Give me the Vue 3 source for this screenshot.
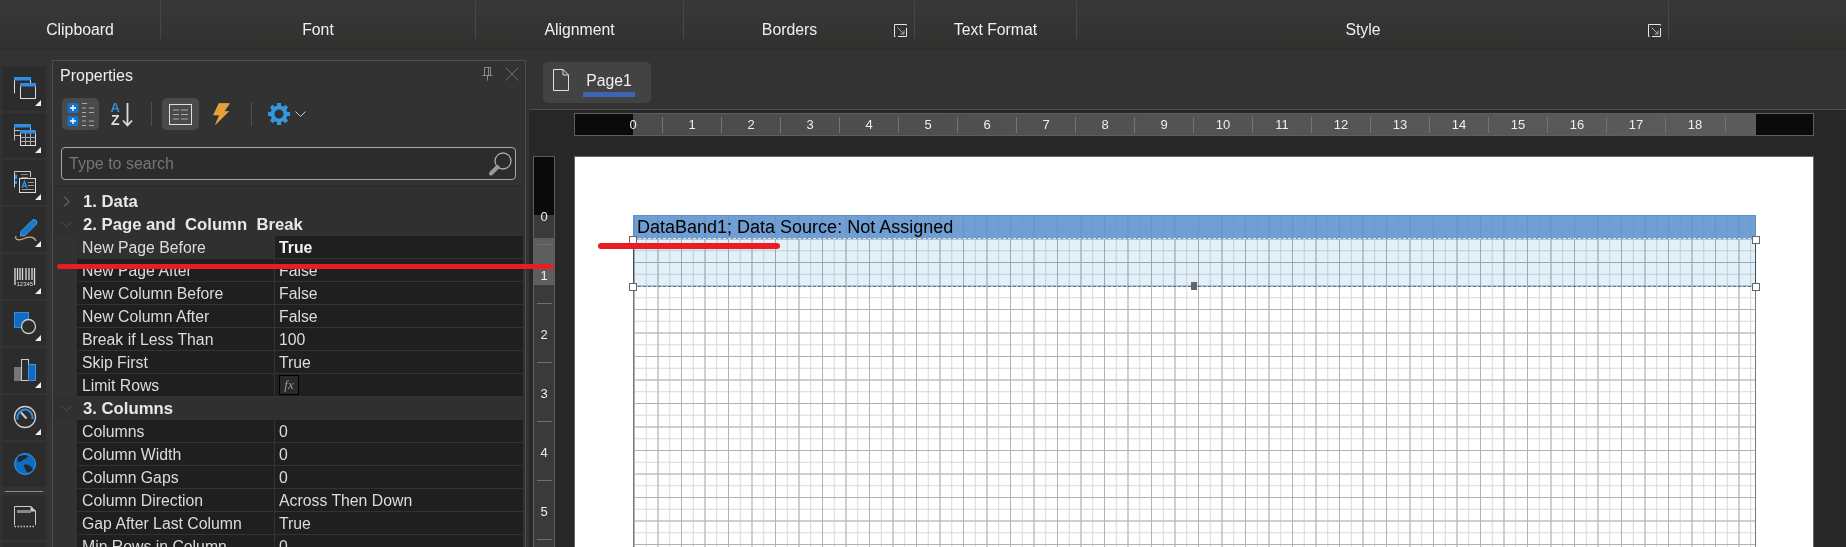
<template>
    <div class="designer">
        <div class="ribbon">
            <div v-for="g in ribbonGroups" :key="g.name" class="ribbon-group" :class="{ launch: g.launcher }">
                <span>{{ g.name }}</span>
                <svg v-if="g.launcher" class="launcher" width="13" height="13" viewBox="0 0 13 13" fill="none">
                    <path d="M12.5 1.500V.5H.5V12.5H1.500M4 12.5H12.5V4" stroke="#e6e6e6" />
                    <path d="M3.500 3.500L10 10M10 6.500V10H6.500" stroke="#aaa" />
                </svg>
            </div>
            <div class="ribbon-rest"></div>
        </div>

        <div class="main">
            <div class="side-tools">
                <div class="side-btn menu">
                    <svg width="44" height="45" viewBox="0 0 44 45" fill="none">
                        <path d="M12.5 27.5V11.5H28.5V17" stroke="#ddd" />
                        <rect x="12" y="11" width="17" height="3.5" fill="#2f8ee0" />
                        <rect x="18.5" y="17.5" width="15" height="15" fill="#2d2d2d" stroke="#ddd" />
                        <rect x="18" y="17" width="16" height="3.5" fill="#2f8ee0" />
                    </svg>
                </div>
                <div class="side-btn menu">
                    <svg width="44" height="45" viewBox="0 0 44 45" fill="none">
                        <path d="M12.5 27.5V11.5H28.5V17M12.5 17.5H18M12.5 22.5H18" stroke="#bbb" />
                        <rect x="12" y="11" width="17" height="3.5" fill="#2f8ee0" />
                        <rect x="18.5" y="17.5" width="15" height="15" fill="#2d2d2d" stroke="#ddd" />
                        <rect x="18" y="17" width="16" height="3.5" fill="#2f8ee0" />
                        <path d="M23.5 20V32M28.5 20V32M18.5 24.5H33.5M18.5 28.5H33.5" stroke="#aaa" />
                    </svg>
                </div>
                <div class="side-btn menu">
                    <svg width="44" height="45" viewBox="0 0 44 45" fill="none">
                        <path d="M12.5 27.5V11.5H28.5V17" stroke="#ccc" />
                        <path d="M14 14.5V19M14 21V24" stroke="#2f8ee0" stroke-width="2" />
                        <path d="M19 14.5H26M19 17.5H26" stroke="#888" />
                        <rect x="17.5" y="18.5" width="16" height="14" fill="#2d2d2d" stroke="#ddd" />
                        <path d="M20 28L22.5 21.5L25 28M21 26H24" stroke="#2f8ee0" stroke-width="1.4" />
                        <path d="M26 22.5H32M26 25.5H32M20 29.5H32" stroke="#999" />
                    </svg>
                </div>
                <div class="side-btn menu">
                    <svg width="44" height="45" viewBox="0 0 44 45" fill="none">
                        <path d="M19 24.500L30 13.500Q32 11.500 34 13.500Q36 15.500 34 17.500L23 28.500L18.500 29Z" fill="#1a78c8" stroke="#4aa3e8" />
                        <path d="M14 29C12 33.500 18 33.500 22 31.500C27 29.500 32 29 34 34" stroke="#d9b26a" stroke-width="1.200" />
                    </svg>
                </div>
                <div class="side-btn menu">
                    <svg width="44" height="45" viewBox="0 0 44 45" fill="none">
                        <path d="M13 14V26M15.500 14V26M18 14V26M20.500 14V26M24 14V26M27 14V26M30 14V26M32.500 14V26" stroke="#ddd" stroke-width="1.300" />
                        <path d="M13 26V31M32.500 26V31" stroke="#ddd" stroke-width="1.300" />
                        <text x="14.500" y="32" class="barcode-text">12345</text>
                    </svg>
                </div>
                <div class="side-btn menu">
                    <svg width="44" height="45" viewBox="0 0 44 45" fill="none">
                        <rect x="12.5" y="11.5" width="14" height="15" fill="#0f6cc2" stroke="#2f8ee0" />
                        <circle cx="26.500" cy="25.500" r="7" fill="#2d2d2d" stroke="#ccc" stroke-width="1.300" />
                    </svg>
                </div>
                <div class="side-btn menu">
                    <svg width="44" height="45" viewBox="0 0 44 45" fill="none">
                        <rect x="12.5" y="19.500" width="7" height="13" fill="#777" stroke="#777" />
                        <rect x="19.5" y="11.500" width="7" height="21" fill="#2d2d2d" stroke="#ccc" />
                        <rect x="26.5" y="16.500" width="7" height="16" fill="#0f6cc2" stroke="#3b97e6" />
                    </svg>
                </div>
                <div class="side-btn menu">
                    <svg width="44" height="45" viewBox="0 0 44 45" fill="none">
                        <circle cx="23" cy="22" r="10.5" stroke="#ccc" stroke-width="1.3" />
                        <path d="M15.5 24.5C14.5 19 19 14.5 23 14.5C27 14.5 31 18 30.5 24" stroke="#2f8ee0" stroke-width="2" />
                        <path d="M19 17.5L24.5 23.5" stroke="#ccc" stroke-width="2" />
                    </svg>
                </div>
                <div class="side-btn">
                    <svg width="44" height="45" viewBox="0 0 44 45" fill="none">
                        <circle cx="23" cy="22" r="10.5" fill="#0f6cc2" stroke="#3b97e6" />
                        <path d="M16 15C19 13 24 12.5 26 14C25 16.5 22 17 20 18.5C19 20 17 20.5 15.5 19.5ZM22 23C25 21.5 29 24 31 27C30 29.5 27 31 25 30.5C24.5 28 21.5 25.5 22 23Z" fill="#22272d" />
                    </svg>
                </div>
                <div class="side-divider"></div>
                <div class="side-btn">
                    <svg width="44" height="45" viewBox="0 0 44 45" fill="none">
                        <path d="M12.5 30V11.5H29L33.5 16V30" stroke="#ccc" />
                        <path d="M12.5 31.5H33.5" stroke="#ccc" stroke-dasharray="1.5 1.5" stroke-width="1.5" />
                        <path d="M29 11.5V16H33.5" fill="#ccc" stroke="#ccc" />
                        <rect x="15" y="15" width="14" height="3" fill="#888" />
                    </svg>
                </div>
                <div class="side-btn"></div>
            </div>

            <div class="panel">
                <div class="panel-head">
                    <span class="panel-title">Properties</span>
                    <svg class="pin" width="11" height="14" viewBox="0 0 11 14" fill="none">
                        <path d="M2.5 .5H8.5V8.5H2.5ZM6.5 .5V8.5M.5 8.5H10.5M5.5 8.5V13.5" stroke="#8a8a8a" />
                    </svg>
                    <svg class="close" width="14" height="14" viewBox="0 0 14 14" fill="none">
                        <path d="M.5 .5L13.5 13.5M13.5 .5L.5 13.5" stroke="#6e6e6e" />
                    </svg>
                </div>
                <div class="panel-tools">
                    <div class="tool-btn on">
                        <svg width="32" height="26" viewBox="0 0 32 26" fill="none">
                            <rect x="2.5" y="2" width="11" height="10" rx="1.5" fill="#1172c9" />
                            <rect x="2.5" y="15" width="11" height="10" rx="1.5" fill="#1172c9" />
                            <path d="M8 4V10M5 7H11M8 17V23M5 20H11" stroke="#fff" stroke-width="1.4" />
                            <path d="M17 2.5H22M17 7H21M24 7H29M17 11.5H21M24 11.5H29M17 15.5H21M17 20H21M24 20H29M17 24.5H21M24 24.5H29" stroke="#aaa" />
                        </svg>
                    </div>
                    <div class="tool-btn">
                        <svg width="24" height="26" viewBox="0 0 24 26" fill="none">
                            <text x=".5" y="11.300" class="sort-a">A</text>
                            <text x="1" y="24" class="sort-z">Z</text>
                            <path d="M17.500 2V24M13 19.500L17.500 24.500L22 19.500" stroke="#ddd" stroke-width="1.800" />
                        </svg>
                    </div>
                    <div class="tool-sep"></div>
                    <div class="tool-btn on list">
                        <svg width="23" height="21" viewBox="0 0 23 21" fill="none">
                            <rect x=".5" y=".5" width="22" height="20" stroke="#ddd" />
                            <path d="M4 6H10M12 6H19M4 10.500H10M12 10.500H19M4 15H10M12 15H19" stroke="#aaa" />
                        </svg>
                    </div>
                    <div class="tool-btn">
                        <svg width="17" height="22" viewBox="0 0 17 22" fill="none">
                            <path d="M6 .5H16.5L11 8.500H15.500L2.500 21.500L6.500 12H.5Z" fill="#e8a02e" stroke="#f3c06f" stroke-width=".5" />
                        </svg>
                    </div>
                    <div class="tool-sep"></div>
                    <div class="tool-gear">
                        <svg width="22" height="22" viewBox="0 0 22 22" fill="none">
                            <circle cx="11" cy="11" r="6.500" stroke="#3597e2" stroke-width="4" />
                            <path d="M11 0V22M0 11H22M3.200 3.200L18.800 18.800M18.800 3.200L3.200 18.800" stroke="#3597e2" stroke-width="4" stroke-dasharray="4.500 13 4.500" />
                        </svg>
                        <svg width="11" height="6" viewBox="0 0 11 6" fill="none">
                            <path d="M.5 .5L5.500 5.500L10.500 .5" stroke="#ccc" />
                        </svg>
                    </div>
                </div>
                <div class="search">
                    <input type="search" placeholder="Type to search" />
                    <svg width="23" height="24" viewBox="0 0 23 24" fill="none">
                        <circle cx="14" cy="9" r="8" stroke="#aaa" stroke-width="1.300" />
                        <path d="M8.500 15L2 21.500" stroke="#999" stroke-width="4" stroke-linecap="round" />
                    </svg>
                </div>
                <div class="prop-grid">
                    <template v-for="row in rows" :key="row.label">
                        <div v-if="row.group" class="group-row">
                            <svg width="7" height="11" viewBox="0 0 7 11" fill="none" :class="{ open: row.open }">
                                <path d="M1 .5L6 5.500L1 10.500" :stroke="row.open ? '#4c4c4c' : '#888'" />
                            </svg>
                            <span>{{ row.label }}</span>
                        </div>
                        <div v-else class="prop-row" :class="{ selected: row.selected }">
                            <div class="prop-label">{{ row.label }}</div>
                            <div class="prop-value">
                                <span v-if="row.fx" class="fx">fx</span>
                                <template v-else>{{ row.value }}</template>
                            </div>
                        </div>
                    </template>
                </div>
            </div>

            <div class="workspace">
                <div class="tabs">
                    <div class="tab">
                        <svg width="16" height="22" viewBox="0 0 16 22" fill="none">
                            <path d="M.5 .5H10L15.500 6V21.500H.5ZM10 .5V6H15.500" stroke="#ddd" />
                        </svg>
                        <span class="tab-name">Page1</span>
                    </div>
                </div>
                <div class="canvas">
                    <div class="h-ruler">
                        <div class="ruler-off"></div>
                        <div v-for="n in 19" :key="n" class="h-cell"><span>{{ n - 1 }}</span></div>
                        <div class="ruler-off fill"></div>
                    </div>
                    <div class="canvas-row">
                        <div class="v-ruler">
                            <div class="v-off"></div>
                            <div class="v-scale">
                                <div class="v-select"></div>
                                <div v-for="n in 6" :key="n" class="v-cell"><span>{{ n - 1 }}</span></div>
                            </div>
                        </div>
                        <div class="page">
                            <div class="page-grid">
                                <div class="band">
                                    <div class="band-head">DataBand1; Data Source: Not Assigned</div>
                                    <div class="band-body"></div>
                                </div>
                                <i class="handle tl"></i>
                                <i class="handle tr"></i>
                                <i class="handle bl"></i>
                                <i class="handle br"></i>
                                <i class="handle-mid"></i>
                            </div>
                        </div>
                    </div>
                </div>
            </div>
        </div>

        <div class="mark mark-grid"></div>
        <div class="mark mark-band"></div>
    </div>
</template>

<script setup>
const ribbonGroups = [
    { name: "Clipboard" },
    { name: "Font" },
    { name: "Alignment" },
    { name: "Borders", launcher: true },
    { name: "Text Format" },
    { name: "Style", launcher: true },
];

const rows = [
    { label: "1. Data", group: true },
    { label: "2. Page and  Column  Break", group: true, open: true },
    { label: "New Page Before", value: "True", selected: true },
    { label: "New Page After", value: "False" },
    { label: "New Column Before", value: "False" },
    { label: "New Column After", value: "False" },
    { label: "Break if Less Than", value: "100" },
    { label: "Skip First", value: "True" },
    { label: "Limit Rows", fx: true },
    { label: "3. Columns", group: true, open: true },
    { label: "Columns", value: "0" },
    { label: "Column Width", value: "0" },
    { label: "Column Gaps", value: "0" },
    { label: "Column Direction", value: "Across Then Down" },
    { label: "Gap After Last Column", value: "True" },
    { label: "Min Rows in Column", value: "0" },
];
</script>

<style>
html,
body {
    margin: 0;
    background: #333;
}
</style>

<style scoped>
.designer {
    position: relative;
    width: 1846px;
    height: 547px;
    overflow: hidden;
    background: #333;
    color: #e4e4e4;
    font-family: "Liberation Sans", Arial, sans-serif;
    font-size: 15.8px;
}

.ribbon {
    display: grid;
    grid-template-columns: 161px 315px 208px 231px 162px 592px 1fr;
    height: 48px;
    background: linear-gradient(#383838, #323130);
    box-shadow: 0 1px 2px #2a2a2a;
}

.ribbon-group {
    position: relative;
    height: 39px;
    padding-top: 21px;
    box-sizing: border-box;
    border-right: 1px solid #474747;
    text-align: center;
    line-height: 18px;
    color: #f0f0f0;
}

.ribbon-group.launch {
    padding-right: 19px;
}

.launcher {
    position: absolute;
    right: 7px;
    top: 24px;
}

.main {
    display: flex;
    height: 499px;
}

.side-tools {
    display: flex;
    flex-direction: column;
    gap: 2px;
    width: 44px;
    padding: 18px 6px 0 2px;
    flex-shrink: 0;
}

.side-btn {
    position: relative;
    width: 44px;
    height: 45px;
    flex-shrink: 0;
    background: #2c2c2c;
}

.side-btn svg {
    display: block;
}

.side-btn.menu::after {
    content: "";
    position: absolute;
    right: 5px;
    bottom: 5px;
    border-style: solid;
    border-width: 0 0 6px 6px;
    border-color: transparent transparent #eee transparent;
}

.barcode-text {
    font-size: 6px;
    fill: #ddd;
    font-family: "Liberation Sans", sans-serif;
}

.sort-a {
    font: bold 13px "Liberation Sans", sans-serif;
    fill: #2f8ee0;
}

.sort-z {
    font: bold 14px "Liberation Sans", sans-serif;
    fill: #dcdcdc;
}

.side-divider {
    width: 38px;
    height: 1px;
    margin: 2px 3px 1px;
    flex-shrink: 0;
    background: #8a8a8a;
}

.panel {
    width: 472px;
    margin-top: 12px;
    flex-shrink: 0;
    border: 1px solid #4e4e4e;
    border-bottom: none;
    background: #323232;
}

.panel-head {
    display: flex;
    align-items: center;
    height: 29px;
    padding: 0 6px 0 7px;
    font-size: 16px;
}

.panel-title {
    flex: 1;
    color: #eee;
}

.pin {
    margin-right: 12px;
    margin-top: -4px;
}

.close {
    margin-top: -3px;
}

.panel-tools {
    display: flex;
    align-items: center;
    height: 32px;
    margin-top: 8px;
    padding-left: 9px;
}

.tool-btn {
    display: flex;
    align-items: center;
    justify-content: center;
    width: 37px;
    height: 32px;
    margin-right: 4px;
    border-radius: 5px;
}

.tool-btn.on {
    background: #4a4a4a;
}

.tool-btn.list {
    margin-left: 10px;
}

.tool-sep {
    width: 1px;
    height: 24px;
    margin-left: 7px;
    background: #505050;
}

.tool-gear {
    display: flex;
    align-items: center;
    gap: 5px;
    margin-left: 16px;
}

.search {
    display: flex;
    align-items: center;
    height: 33px;
    margin: 17px 9px 0 8px;
    padding: 0 3px 0 7px;
    box-sizing: border-box;
    border: 1px solid #a8a8a8;
    border-radius: 4px;
    background: #2c2c2c;
}

.search input {
    flex: 1;
    min-width: 0;
    border: none;
    outline: none;
    padding: 0;
    background: transparent;
    color: #ddd;
    font: 16px "Liberation Sans", Arial, sans-serif;
}

.search input::placeholder {
    color: #767676;
    opacity: 1;
}

.prop-grid {
    margin: 6px 2px 0 2px;
    padding-top: 3px;
    border-top: 1px solid #282828;
}

.group-row {
    display: flex;
    align-items: center;
    height: 23px;
    background: #303030;
    font-size: 16.700px;
    font-weight: bold;
    color: #e8e8e8;
    white-space: pre;
}

.group-row svg {
    margin: 0 13px 0 8px;
    flex-shrink: 0;
}

.group-row svg.open {
    transform: rotate(90deg);
}

.prop-row {
    display: flex;
    height: 23px;
    margin-left: 22px;
    box-sizing: border-box;
    border-bottom: 1px solid #333;
    background: #1f1f1f;
    line-height: 23px;
    color: #dcdcdc;
}

.prop-row.selected {
    background: #303030;
}

.prop-label {
    width: 198px;
    padding-left: 5px;
    box-sizing: border-box;
    border-right: 1px solid #333;
}

.prop-value {
    flex: 1;
    padding-left: 4px;
}

.prop-row.selected .prop-value {
    background: #1f1f1f;
    color: #f2f2f2;
    font-weight: bold;
}

.fx {
    display: inline-flex;
    align-items: center;
    justify-content: center;
    width: 20px;
    height: 20px;
    margin: 1px 0 0 0;
    box-sizing: border-box;
    vertical-align: top;
    border: 1px solid #000;
    background: #2a2a2a;
    color: #999;
    font: italic 13px "Liberation Serif", serif;
}

.workspace {
    flex: 1;
    margin-left: 3px;
    min-width: 0;
}

.tabs {
    height: 62px;
    padding: 14px 0 0 14px;
    box-sizing: border-box;
    border-bottom: 1px solid #4e4e4e;
}

.tab {
    display: flex;
    align-items: flex-start;
    width: 108px;
    height: 41px;
    padding: 7px 0 0 10px;
    box-sizing: border-box;
    border-radius: 5px;
    background: #434343;
}

.tab-name {
    margin: 1px 0 0 14px;
    padding: 0 3.200px;
    height: 22px;
    line-height: 22px;
    font-size: 15.800px;
    color: #f0f0f0;
    border-bottom: 5px solid #3d66b0;
}

.canvas {
    height: 437px;
    padding-top: 3px;
    box-sizing: border-box;
    background: #272727;
}

.h-ruler {
    display: flex;
    width: 1240px;
    height: 23px;
    margin-left: 45px;
    box-sizing: border-box;
    border: 1px solid #5e5e5e;
    background: linear-gradient(90deg, #4a4a4a, #5c5c5c);
}

.ruler-off {
    width: 58px;
    flex-shrink: 0;
    background: #0a0a0a;
}

.ruler-off.fill {
    flex: 1;
}

.h-cell {
    width: 59px;
    flex-shrink: 0;
    font-size: 13px;
    line-height: 21px;
    color: #eee;
    background: linear-gradient(#747474, #747474) center / 1px 16px no-repeat;
}

.h-cell:nth-last-child(2) {
    width: 61px;
}

.h-cell span {
    display: inline-block;
    transform: translateX(-50%);
}

.canvas-row {
    display: flex;
    margin-top: 20px;
}

.v-ruler {
    width: 22px;
    margin: 0 19px 0 4px;
    box-sizing: border-box;
    border: 1px solid #5e5e5e;
    border-bottom: none;
    flex-shrink: 0;
}

.v-off {
    height: 58px;
    background: #0a0a0a;
}

.v-scale {
    position: relative;
    height: 333px;
    background: #3a3a3a;
}

.v-select {
    position: absolute;
    top: 23px;
    left: 0;
    right: 0;
    height: 47px;
    background: #5e5e5e;
}

.v-cell {
    position: relative;
    height: 59px;
    font-size: 13px;
    line-height: 14px;
    text-align: center;
    color: #eee;
    background: linear-gradient(#6e6e6e, #6e6e6e) center / 15px 1px no-repeat;
}

.v-cell span {
    display: block;
    transform: translateY(-5px);
}

.page {
    flex: none;
    width: 1240px;
    height: 391px;
    padding: 58px 57px 0 58px;
    box-sizing: border-box;
    border: 1px solid #666;
    border-bottom: none;
    background: #fff;
}

.page-grid {
    position: relative;
    height: 332px;
    box-sizing: border-box;
    border-left: 1px solid #777;
    border-right: 1px solid #777;
    background-image:
        linear-gradient(90deg, #b2b2b2 1px, transparent 1px),
        linear-gradient(#b2b2b2 1px, transparent 1px),
        linear-gradient(90deg, #d8d8d8 1px, transparent 1px),
        linear-gradient(#d8d8d8 1px, transparent 1px);
    background-size:
        23.500px 23.500px,
        23.500px 23.500px,
        11.750px 11.750px,
        11.750px 11.750px;
}

.band {
    position: relative;
    margin: 0 -1px;
}

.band-head {
    height: 24px;
    padding-left: 3px;
    box-sizing: border-box;
    border: 1px solid #6390c0;
    border-bottom: 1px dashed #d6e6f2;
    background: rgba(90, 143, 204, 0.86);
    font-size: 18px;
    line-height: 22px;
    color: #000;
    white-space: nowrap;
}

.band-body {
    height: 48px;
    box-sizing: border-box;
    border: 1px solid #7ea6d2;
    border-top: none;
    border-bottom: 1px dashed #5e94d0;
    background: #e2f1f9;
    mix-blend-mode: multiply;
}

.handle {
    position: absolute;
    width: 6px;
    height: 6px;
    border: 1px solid #666;
    background: #fff;
}

.handle.tl,
.handle.bl {
    left: -5px;
}

.handle.tr,
.handle.br {
    right: -5px;
}

.handle.tl,
.handle.tr {
    top: 21px;
}

.handle.bl,
.handle.br {
    top: 68px;
}

.handle-mid {
    position: absolute;
    left: 557px;
    top: 67px;
    width: 6px;
    height: 8px;
    background: #666;
}

.mark {
    position: absolute;
    background: #e81e21;
    border-radius: 3px;
}

.mark-grid {
    left: 57px;
    top: 264px;
    width: 497px;
    height: 5px;
}

.mark-band {
    left: 598px;
    top: 243px;
    width: 182px;
    height: 6px;
}
</style>
